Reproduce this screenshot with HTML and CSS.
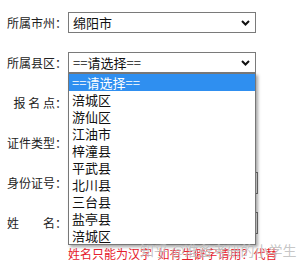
FILE: index.html
```html
<!DOCTYPE html>
<html lang="zh-CN">
<head>
    <meta charset="UTF-8" />
    <meta name="viewport" content="width=device-width, initial-scale=1.0" />
    <title>考生报名</title>
    <link rel="stylesheet" href="styles.css">
</head>
<body>

<form class="form">
    <div class="row">
        <label class="label">所属市州：</label>
        <div class="select">
            <span>绵阳市</span>
            <svg class="chevron" width="9" height="6" viewBox="0 0 9 6"><path d="M1 1 L4.5 4.5 L8 1" fill="none" stroke="#111" stroke-width="2"/></svg>
        </div>
    </div>

    <div class="row">
        <label class="label">所属县区：</label>
        <div class="select-wrap">
            <div class="select">
                <span>==请选择==</span>
                <svg class="chevron" width="9" height="6" viewBox="0 0 9 6"><path d="M1 1 L4.5 4.5 L8 1" fill="none" stroke="#111" stroke-width="2"/></svg>
            </div>
            <!-- open dropdown -->
            <ul class="options">
                <li class="active">==请选择==</li>
                <li>涪城区</li>
                <li>游仙区</li>
                <li>江油市</li>
                <li>梓潼县</li>
                <li>平武县</li>
                <li>北川县</li>
                <li>三台县</li>
                <li>盐亭县</li>
                <li>涪城区</li>
            </ul>
        </div>
    </div>

    <div class="row">
        <label class="label">报 名 点：</label>
        <div class="select"></div>
    </div>

    <div class="row">
        <label class="label">证件类型：</label>
        <div class="select"></div>
    </div>

    <div class="row">
        <label class="label">身份证号：</label>
        <input class="input" type="text">
    </div>

    <div class="row">
        <label class="label">姓　　名：</label>
        <input class="input" type="text">
    </div>

    <p class="hint">姓名只能为汉字&nbsp; 如有生僻字请用？代替</p>
</form>

<div class="watermark">知乎 @准备考研的小学生</div>

</body>
</html>
```

FILE: styles.css
```css
body {
    margin: 0;
    font-family: "Noto Sans CJK SC", "DejaVu Sans", sans-serif;
    font-size: 12px;
    color: #222;
    background: #fff;
}
.form {
    padding: 12px 0 0 7px;
    margin: 0;
}
.row {
    display: flex;
    align-items: center;
    height: 21px;
    margin-bottom: 19px;
}
.label {
    width: 60px;
    margin-right: 1px;
    text-align: right;
    white-space: pre;
}
.select-wrap {
    position: relative;
}
.select {
    box-sizing: border-box;
    width: 188px;
    height: 21px;
    border: 1px solid #7a7a7a;
    background: #fff;
    display: flex;
    align-items: center;
    justify-content: space-between;
    padding: 0 5px 0 4px;
    font-size: 13px;
    color: #111;
}
.chevron {
    display: block;
}
.input {
    box-sizing: border-box;
    width: 190px;
    height: 22px;
    border: 1px solid #7a7a7a;
    margin: 0;
    padding: 0;
}
.options {
    position: absolute;
    top: 21px;
    left: 0;
    width: 188px;
    box-sizing: border-box;
    margin: 0;
    padding: 0;
    list-style: none;
    background: #fff;
    border: 1px solid #777;
    box-shadow: 2px 2px 3px rgba(0, 0, 0, 0.35);
    font-size: 13px;
    color: #111;
    z-index: 2;
}
.options li {
    height: 17px;
    line-height: 17px;
    padding-left: 3px;
}
.options li.active {
    background: #2f8ff0;
    color: #fff;
}
.hint {
    margin: -7px 0 0 61px;
    color: #e5202a;
    font-size: 12px;
}
.watermark {
    position: absolute;
    left: 140px;
    top: 240px;
    font-size: 14px;
    color: rgba(150, 150, 150, 0.55);
    text-shadow: 0 0 1px rgba(255, 255, 255, 0.8);
    z-index: 3;
}
```
